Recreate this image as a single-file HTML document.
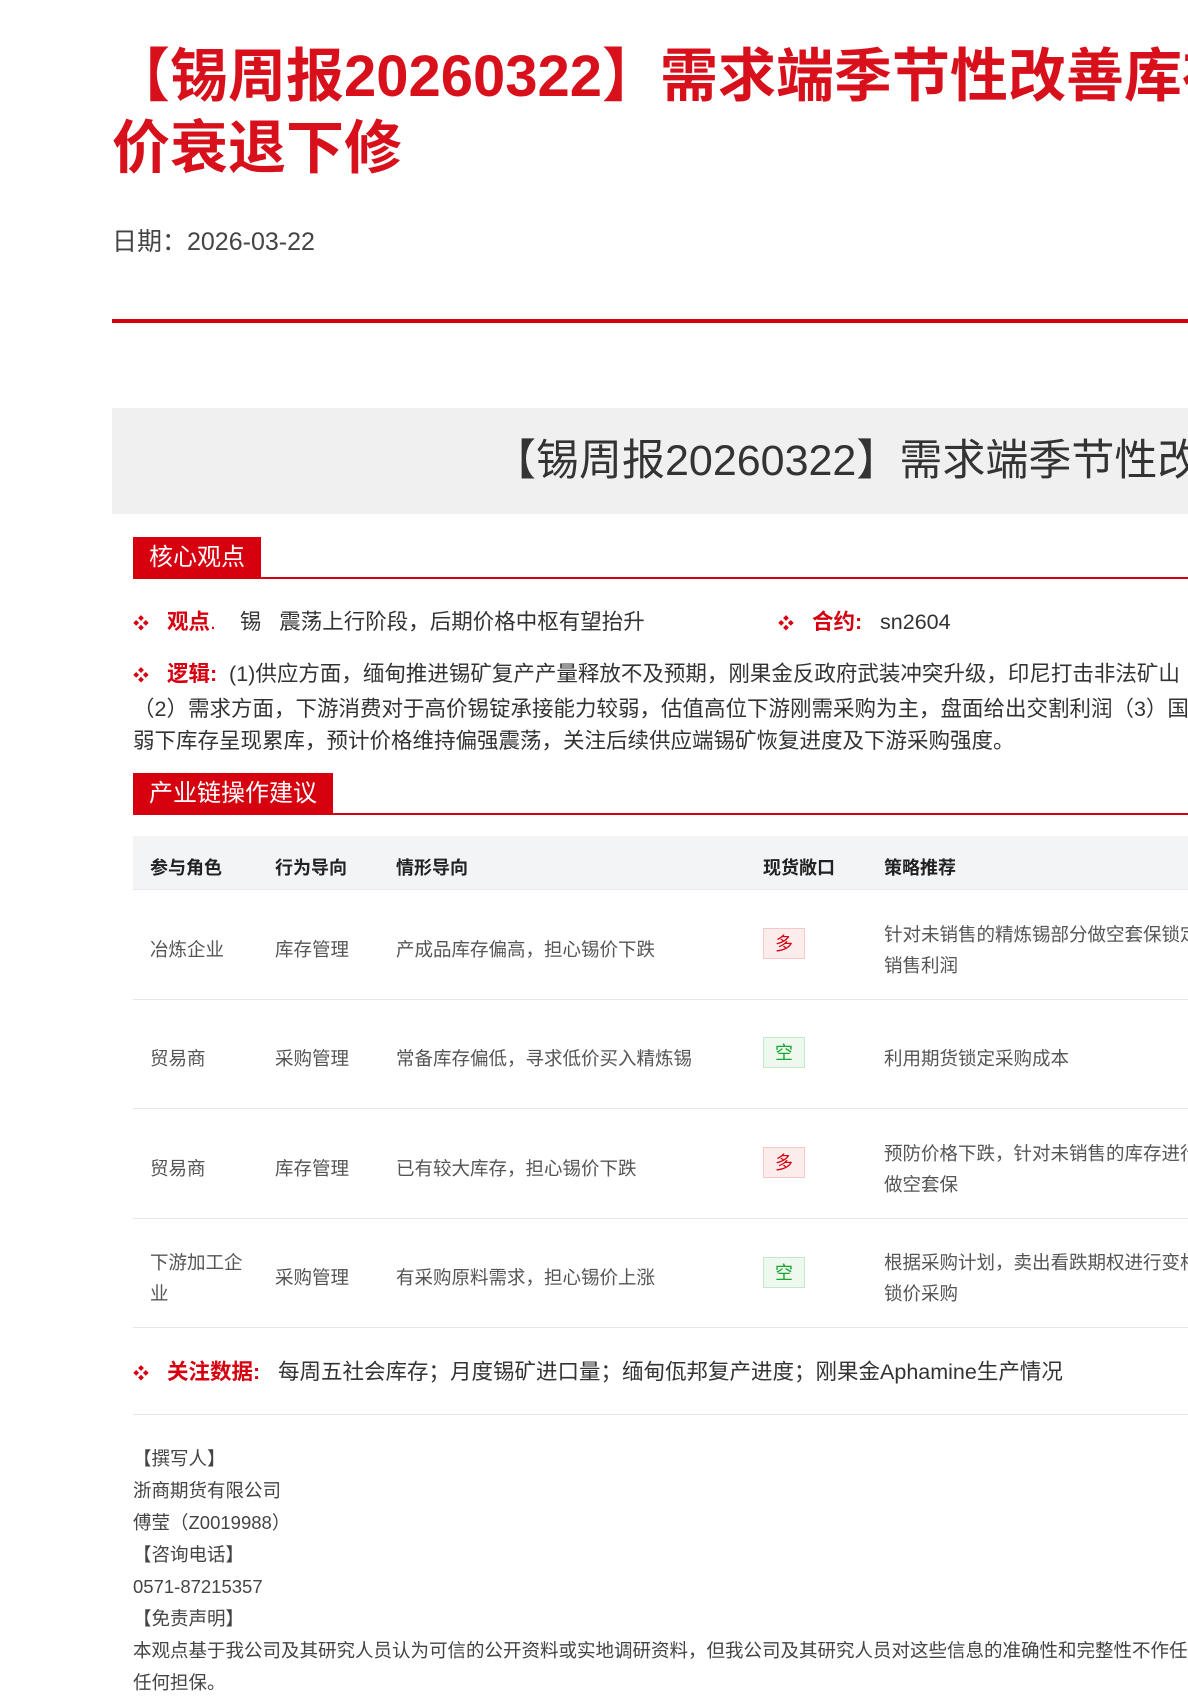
<!DOCTYPE html>
<html><head><meta charset="utf-8"><style>
*{margin:0;padding:0;box-sizing:border-box}
body{width:1188px;height:1680px;overflow:hidden;background:#fff;font-family:"Liberation Sans","Noto Sans CJK SC",sans-serif;position:relative;color:#333}
.a{position:absolute;white-space:nowrap}
.t{left:112px;color:#d8101c;font-weight:bold;font-size:58px;line-height:70px}
.hd{left:133px;height:41px;background:#d7000f;color:#fff;font-size:24px;line-height:42px;padding:0 16px}
.hl{left:133px;width:1100px;height:2px;background:#d7000f}
.b{font-size:21.5px;color:#333}
.dm{color:#d7000f;font-size:16px}
.r{color:#d7000f;font-weight:bold}
.th{left:133px;top:836px;width:1100px;height:54px;background:#f3f4f6;border-bottom:1px solid #e4e7ed}
.tf{font-size:18px;font-weight:bold;color:#222;top:854px}
.td{font-size:18.5px;color:#555}
.rl{left:133px;width:1100px;height:1px;background:#e4e7ed}
.bd{width:42px;height:31px;font-size:18px;text-align:center;line-height:30px}
.red{background:#fdecec;border:1px solid #f8c7c7;color:#d7000f}
.grn{background:#edf8ee;border:1px solid #c6e8ca;color:#1aa632}
.f{left:133px;font-size:18.5px;color:#444}
</style></head><body>
<div class="a t" style="top:42px">【锡周报20260322】需求端季节性改善库存</div>
<div class="a t" style="top:114px">价衰退下修</div>
<div class="a" style="left:112px;top:222px;font-size:25px;color:#444">日期：2026-03-22</div>
<div class="a" style="left:112px;top:319px;width:1100px;height:4px;background:#d7000f"></div>
<div class="a" style="left:112px;top:408px;width:1100px;height:106px;background:#f0f0f0"></div>
<div class="a" style="left:493px;top:435px;font-size:43px;color:#333;line-height:52px">【锡周报20260322】需求端季节性改</div>
<div class="a hd" style="top:537px">核心观点</div>
<div class="a hl" style="top:577px"></div>
<div class="a b" style="left:133px;top:605px"><span class="dm">❖</span>&nbsp;&nbsp;&nbsp;<span class="r">观点</span><span style="color:#d7000f">.</span>&nbsp;&nbsp;&nbsp;&nbsp;锡&nbsp;&nbsp;&nbsp;震荡上行阶段，后期价格中枢有望抬升</div>
<div class="a b" style="left:778px;top:605px"><span class="dm">❖</span>&nbsp;&nbsp;&nbsp;<span class="r">合约:</span>&nbsp;&nbsp;&nbsp;sn2604</div>
<div class="a b" style="left:133px;top:658px;line-height:32px">
<div><span class="dm">❖</span>&nbsp;&nbsp;&nbsp;<span class="r">逻辑:</span>&nbsp;&nbsp;(1)供应方面，缅甸推进锡矿复产产量释放不及预期，刚果金反政府武装冲突升级，印尼打击非法矿山</div>
<div>（2）需求方面，下游消费对于高价锡锭承接能力较弱，估值高位下游刚需采购为主，盘面给出交割利润（3）国内</div>
<div>弱下库存呈现累库，预计价格维持偏强震荡，关注后续供应端锡矿恢复进度及下游采购强度。</div></div>
<div class="a hd" style="top:773px">产业链操作建议</div>
<div class="a hl" style="top:813px"></div>
<div class="a th"></div>
<div class="a tf" style="left:150px">参与角色</div>
<div class="a tf" style="left:275px">行为导向</div>
<div class="a tf" style="left:396px">情形导向</div>
<div class="a tf" style="left:763px">现货敞口</div>
<div class="a tf" style="left:884px">策略推荐</div>

<div class="a td" style="left:150px;top:936px">冶炼企业</div>
<div class="a td" style="left:275px;top:936px">库存管理</div>
<div class="a td" style="left:396px;top:936px">产成品库存偏高，担心锡价下跌</div>
<div class="a bd red" style="left:763px;top:928px">多</div>
<div class="a td" style="left:884px;top:919px;line-height:31px">针对未销售的精炼锡部分做空套保锁定<br>销售利润</div>
<div class="a rl" style="top:999px"></div>

<div class="a td" style="left:150px;top:1045px">贸易商</div>
<div class="a td" style="left:275px;top:1045px">采购管理</div>
<div class="a td" style="left:396px;top:1045px">常备库存偏低，寻求低价买入精炼锡</div>
<div class="a bd grn" style="left:763px;top:1037px">空</div>
<div class="a td" style="left:884px;top:1045px">利用期货锁定采购成本</div>
<div class="a rl" style="top:1108px"></div>

<div class="a td" style="left:150px;top:1155px">贸易商</div>
<div class="a td" style="left:275px;top:1155px">库存管理</div>
<div class="a td" style="left:396px;top:1155px">已有较大库存，担心锡价下跌</div>
<div class="a bd red" style="left:763px;top:1147px">多</div>
<div class="a td" style="left:884px;top:1138px;line-height:31px">预防价格下跌，针对未销售的库存进行<br>做空套保</div>
<div class="a rl" style="top:1218px"></div>

<div class="a td" style="left:150px;top:1247px;line-height:31px">下游加工企<br>业</div>
<div class="a td" style="left:275px;top:1264px">采购管理</div>
<div class="a td" style="left:396px;top:1264px">有采购原料需求，担心锡价上涨</div>
<div class="a bd grn" style="left:763px;top:1257px">空</div>
<div class="a td" style="left:884px;top:1247px;line-height:31px">根据采购计划，卖出看跌期权进行变相<br>锁价采购</div>
<div class="a rl" style="top:1327px"></div>

<div class="a b" style="left:133px;top:1355px"><span class="dm">❖</span>&nbsp;&nbsp;&nbsp;<span class="r">关注数据:</span>&nbsp;&nbsp;&nbsp;每周五社会库存；月度锡矿进口量；缅甸佤邦复产进度；刚果金Aphamine生产情况</div>
<div class="a rl" style="top:1414px;background:#e6e6e6"></div>
<div class="a f" style="top:1443px;line-height:32px">【撰写人】<br>浙商期货有限公司<br>傅莹（Z0019988）<br>【咨询电话】<br>0571-87215357<br>【免责声明】<br>本观点基于我公司及其研究人员认为可信的公开资料或实地调研资料，但我公司及其研究人员对这些信息的准确性和完整性不作任<br>任何担保。</div>
</body></html>
